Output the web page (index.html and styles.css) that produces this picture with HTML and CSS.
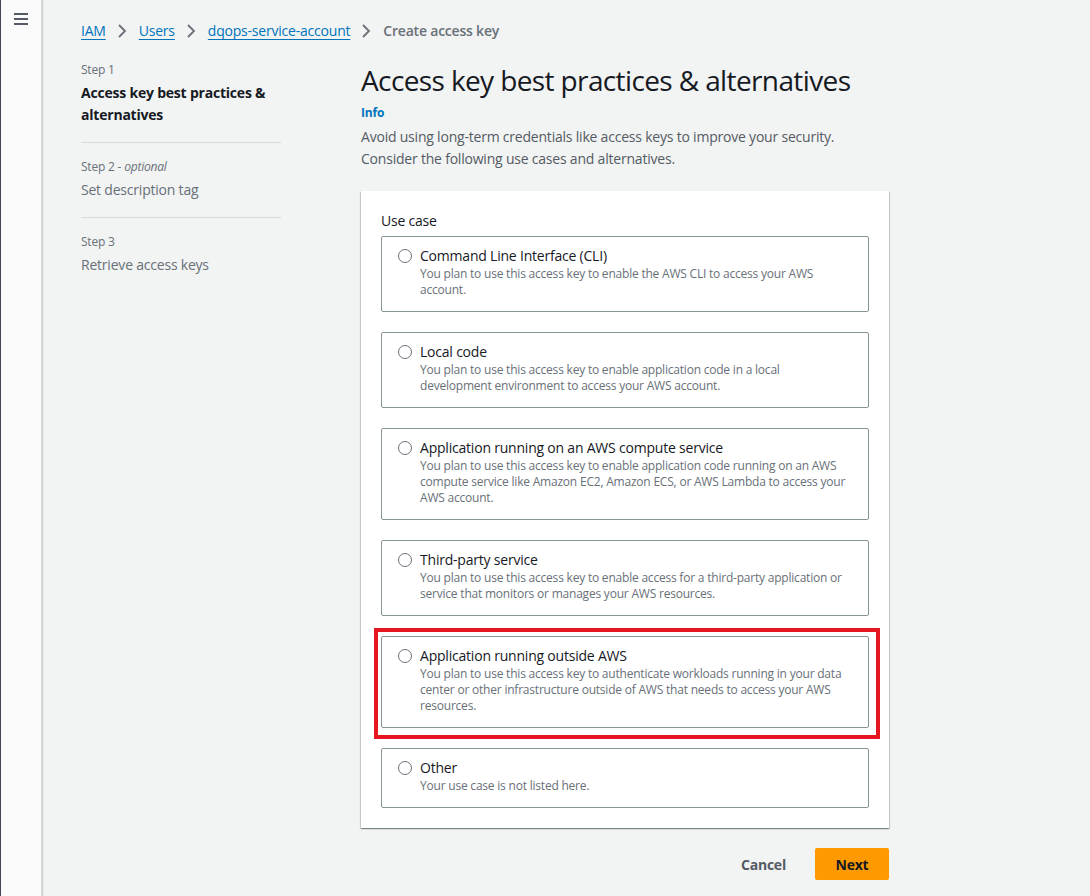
FILE: index.html
```html
<!DOCTYPE html>
<html lang="en">
<head>
  <meta charset="UTF-8">
  <title>Create access key</title>
  <link rel="stylesheet" href="styles.css">
</head>
<body>

<div class="app">
  <!-- collapsed navigation -->
  <nav class="nav-rail">
    <button class="menu-btn" aria-label="Open navigation">
      <span></span><span></span><span></span>
    </button>
  </nav>

  <div class="content">
    <div class="breadcrumbs">
      <a href="#">IAM</a>
      <svg class="chev" viewBox="0 0 16 16"><polyline points="5,2 11,8 5,14"/></svg>
      <a href="#">Users</a>
      <svg class="chev" viewBox="0 0 16 16"><polyline points="5,2 11,8 5,14"/></svg>
      <a href="#">dqops-service-account</a>
      <svg class="chev" viewBox="0 0 16 16"><polyline points="5,2 11,8 5,14"/></svg>
      <span class="current">Create access key</span>
    </div>

    <div class="wizard">
      <ul class="steps">
        <li class="step active">
          <div class="step-label">Step 1</div>
          <div class="step-title">Access key best practices &amp; alternatives</div>
        </li>
        <li class="step">
          <div class="step-label">Step 2 - <i>optional</i></div>
          <div class="step-title">Set description tag</div>
        </li>
        <li class="step">
          <div class="step-label">Step 3</div>
          <div class="step-title">Retrieve access keys</div>
        </li>
      </ul>

      <main class="main">
        <h1>Access key best practices &amp; alternatives</h1>
        <a class="info" href="#">Info</a>
        <p class="lead">Avoid using long-term credentials like access keys to improve your security. Consider the following use cases and alternatives.</p>

        <div class="container">
          <div class="field-label">Use case</div>
          <div class="tiles">
            <label class="tile">
              <span class="radio"></span>
              <span class="tile-text">
                <span class="tile-title">Command Line Interface (CLI)</span>
                <span class="tile-desc">You plan to use this access key to enable the AWS CLI to access your AWS account.</span>
              </span>
            </label>
            <label class="tile">
              <span class="radio"></span>
              <span class="tile-text">
                <span class="tile-title">Local code</span>
                <span class="tile-desc">You plan to use this access key to enable application code in a local development environment to access your AWS account.</span>
              </span>
            </label>
            <label class="tile">
              <span class="radio"></span>
              <span class="tile-text">
                <span class="tile-title">Application running on an AWS compute service</span>
                <span class="tile-desc">You plan to use this access key to enable application code running on an AWS compute service like Amazon EC2, Amazon ECS, or AWS Lambda to access your AWS account.</span>
              </span>
            </label>
            <label class="tile">
              <span class="radio"></span>
              <span class="tile-text">
                <span class="tile-title">Third-party service</span>
                <span class="tile-desc">You plan to use this access key to enable access for a third-party application or service that monitors or manages your AWS resources.</span>
              </span>
            </label>
            <label class="tile marked">
              <span class="radio"></span>
              <span class="tile-text">
                <span class="tile-title">Application running outside AWS</span>
                <span class="tile-desc">You plan to use this access key to authenticate workloads running in your data center or other infrastructure outside of AWS that needs to access your AWS resources.</span>
              </span>
            </label>
            <label class="tile">
              <span class="radio"></span>
              <span class="tile-text">
                <span class="tile-title">Other</span>
                <span class="tile-desc">Your use case is not listed here.</span>
              </span>
            </label>
          </div>
        </div>

        <div class="actions">
          <button class="btn-link">Cancel</button>
          <button class="btn-primary">Next</button>
        </div>
      </main>
    </div>
  </div>
</div>

</body>
</html>
```

FILE: styles.css
```css
body {
  margin: 0;
  padding: 0;
  background-color: #f2f3f3;
  font-family: "Open Sans", "Noto Sans", Arial, sans-serif;
  font-size: 14px;
  line-height: 22px;
  letter-spacing: -0.015em;
  color: #16191f;
}

.app {
  display: flex;
  min-height: 896px;
}

.nav-rail {
  width: 40px;
  flex-shrink: 0;
  background-color: #fafafa;
  border-left: 1px solid #414750;
  border-right: 1px solid #d5dbdb;
  box-shadow: 1px 0 1px rgba(0, 28, 36, 0.15);
}

.menu-btn {
  display: flex;
  flex-direction: column;
  gap: 3px;
  margin: 13px 0 0 13px;
  padding: 0;
  border: none;
  background: none;
  cursor: pointer;
}

.menu-btn span {
  display: block;
  width: 14px;
  height: 2px;
  background-color: #545b64;
}

.content {
  flex: 1;
  padding: 21px 0 0 39px;
}

/* breadcrumbs */
.breadcrumbs {
  display: flex;
  align-items: center;
  height: 20px;
  line-height: 20px;
}

.breadcrumbs a {
  color: #0073bb;
  text-decoration: underline;
  text-underline-offset: 3px;
}

.chev {
  width: 16px;
  height: 16px;
  margin: 0 9px 0 8px;
  fill: none;
  stroke: #687078;
  stroke-width: 1.8;
}

.breadcrumbs .current {
  color: #687078;
  font-weight: 600;
}

/* wizard */
.wizard {
  display: flex;
  gap: 80px;
  margin-top: 21px;
}

.steps {
  list-style: none;
  margin: 0;
  padding: 0;
  width: 200px;
  flex-shrink: 0;
}

.step {
  padding: 16px 0;
  border-bottom: 1px solid #d5dbdb;
}

.step:first-child {
  padding-top: 0;
}

.step:last-child {
  border-bottom: none;
}

.step-label {
  font-size: 12px;
  line-height: 16px;
  color: #687078;
  margin-bottom: 4px;
}

.step-title {
  color: #687078;
}

.step.active .step-title {
  color: #16191f;
  font-weight: 700;
}

.main {
  width: 528px;
}

h1 {
  margin: 0;
  font-size: 28px;
  line-height: 36px;
  font-weight: 400;
  letter-spacing: -0.022em;
  color: #16191f;
}

.info {
  display: block;
  margin-top: 7px;
  font-size: 12px;
  line-height: 16px;
  font-weight: 700;
  color: #0073bb;
  text-decoration: none;
}

.lead {
  margin: 5px 0 0 0;
  color: #545b64;
}

.container {
  margin-top: 21px;
  padding: 20px;
  background-color: #ffffff;
  box-shadow: 0 1px 1px 0 rgba(0, 28, 36, 0.3), 1px 1px 1px 0 rgba(0, 28, 36, 0.15), -1px 1px 1px 0 rgba(0, 28, 36, 0.15);
}

.field-label {
  line-height: 20px;
  margin-bottom: 5px;
  color: #16191f;
}

.tiles {
  display: flex;
  flex-direction: column;
  gap: 20px;
}

.tile {
  position: relative;
  display: flex;
  gap: 8px;
  padding: 9px 16px 13px 16px;
  border: 1px solid #879596;
  border-radius: 2px;
  cursor: pointer;
}

.radio {
  width: 12px;
  height: 12px;
  margin-top: 3px;
  flex-shrink: 0;
  border: 1px solid #687078;
  border-radius: 50%;
  background-color: #ffffff;
}

.tile-text {
  display: flex;
  flex-direction: column;
}

.tile-title {
  line-height: 20px;
  color: #16191f;
}

.tile-desc {
  font-size: 12px;
  line-height: 16px;
  color: #687078;
}

/* red annotation frame */
.tile.marked::after {
  content: "";
  position: absolute;
  top: -9px;
  left: -8px;
  right: -12px;
  bottom: -12px;
  border: 4px solid #e5161f;
}

.actions {
  display: flex;
  justify-content: flex-end;
  align-items: center;
  gap: 9px;
  margin-top: 20px;
}

.btn-link, .btn-primary {
  font-family: inherit;
  font-size: 14px;
  font-weight: 700;
  letter-spacing: inherit;
  border-radius: 2px;
  cursor: pointer;
}

.btn-link {
  padding: 4px 20px;
  border: none;
  background: none;
  color: #545b64;
}

.btn-primary {
  width: 74px;
  height: 32px;
  border: none;
  background-color: #ff9900;
  color: #16191f;
}
```
